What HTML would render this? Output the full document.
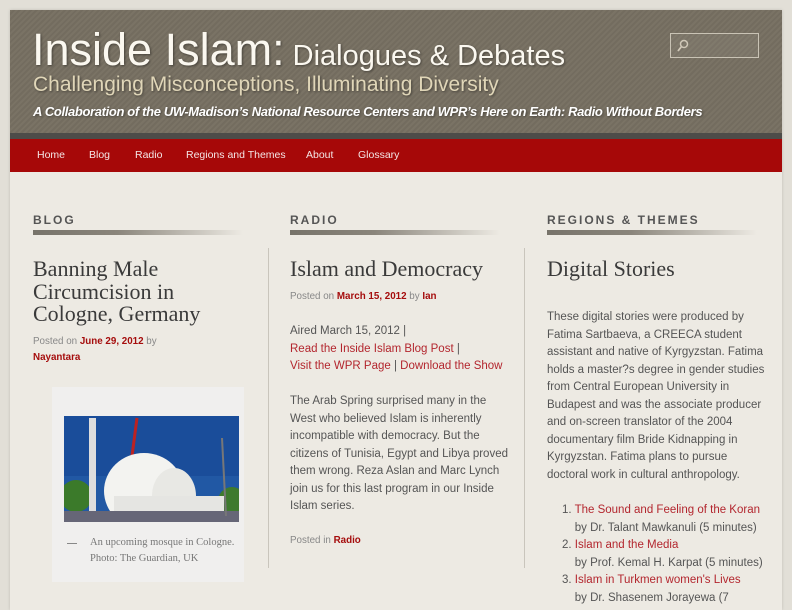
<!DOCTYPE html>
<html><head><meta charset="utf-8"><style>
*{margin:0;padding:0;box-sizing:border-box}
body{width:792px;height:600px;overflow:hidden;background:#e2dfd7;font-family:"Liberation Sans",sans-serif;position:relative}
.box{position:absolute;left:10px;top:10px;width:772px;height:600px;background:#edeae3;box-shadow:0 0 3px rgba(0,0,0,.15)}
.hdr{position:absolute;left:10px;top:10px;width:772px;height:123px;background:repeating-linear-gradient(135deg,#7a7365 0 2px,#736c5f 2px 4px)}
.band{position:absolute;left:10px;top:133px;width:772px;height:6px;background:#4d4c49}
.nav{position:absolute;left:10px;top:139px;width:772px;height:33px;background:#a60808}
.nav span{position:absolute;top:10px;font-size:10.5px;color:#f4e6e6}
.t{position:absolute;color:#fff;white-space:nowrap;text-shadow:1px 1px 2px rgba(0,0,0,.4)}
.search{position:absolute;left:670px;top:33px;width:89px;height:25px;border:1px solid #c9c3b5;background:rgba(255,255,255,.05)}
.h{position:absolute;top:213px;font-size:12px;font-weight:bold;letter-spacing:2px;color:#555}
.bar{position:absolute;top:230px;width:210px;height:5px;background:linear-gradient(90deg,#77736a,#8a857b 40%,rgba(200,195,185,0))}
.vl{position:absolute;top:248px;width:1px;height:320px;background:#c9c5bc}
.title{position:absolute;font-family:"Liberation Serif",serif;font-size:22px;line-height:22.5px;color:#3a3a3a}
.meta{position:absolute;font-size:9.8px;color:#888;line-height:16px}
.meta b{color:#a50d0d}
.p{position:absolute;font-size:11.5px;line-height:17.5px;color:#555;white-space:nowrap}
a{color:#b3262e;text-decoration:none}
</style></head><body>
<div class="box"></div>
<div class="hdr"></div>
<div class="band"></div>
<div class="t" style="left:32px;top:24px;font-size:45px;line-height:52px;color:#fbf8f0">Inside Islam:<span style="font-size:29px"> Dialogues &amp; Debates</span></div>
<div class="t" style="left:33px;top:73px;font-size:21px;color:#e0d6b8">Challenging Misconceptions, Illuminating Diversity</div>
<div class="t" style="left:33px;top:104px;font-size:13px;font-weight:bold;font-style:italic;letter-spacing:-0.35px">A Collaboration of the UW-Madison’s National Resource Centers and WPR’s Here on Earth: Radio Without Borders</div>
<div class="search"><svg width="14" height="16" style="position:absolute;left:5px;top:4px"><circle cx="8" cy="6" r="3.5" fill="none" stroke="#d0c8b8" stroke-width="1.5"/><line x1="5.5" y1="8.5" x2="2" y2="13" stroke="#d0c8b8" stroke-width="1.8"/></svg></div>
<div class="nav"><span style="left:27px">Home</span><span style="left:79px">Blog</span><span style="left:125px">Radio</span><span style="left:176px">Regions and Themes</span><span style="left:296px">About</span><span style="left:348px">Glossary</span></div>

<div class="h" style="left:33px">BLOG</div><div class="bar" style="left:33px"></div>
<div class="h" style="left:290px">RADIO</div><div class="bar" style="left:290px"></div>
<div class="h" style="left:547px">REGIONS &amp; THEMES</div><div class="bar" style="left:547px"></div>
<div class="vl" style="left:268px"></div><div class="vl" style="left:524px"></div>

<div class="title" style="left:33px;top:258px">Banning Male<br>Circumcision in<br>Cologne, Germany</div>
<div class="meta" style="left:33px;top:334px">Posted on <b>June 29, 2012</b> by<br><b>Nayantara</b></div>
<div style="position:absolute;left:52px;top:387px;width:192px;height:195px;background:#f0efee"></div>
<svg style="position:absolute;left:64px;top:416px" width="175" height="106">
<rect width="175" height="106" fill="#1a4d9a"/><rect y="60" width="175" height="46" fill="#2e6ab5" opacity=".4"/>
<circle cx="12" cy="80" r="16" fill="#3b7a2a"/><circle cx="168" cy="85" r="14" fill="#3e7a2e"/>
<rect x="25" y="2" width="7" height="100" fill="#ddd"/><line x1="73" y1="2" x2="68" y2="40" stroke="#b22" stroke-width="3"/>
<ellipse cx="80" cy="75" rx="40" ry="38" fill="#f3f3f0"/><ellipse cx="110" cy="80" rx="22" ry="28" fill="#e8e8e4"/>
<rect x="50" y="80" width="110" height="26" fill="#e5e5e2"/><rect x="0" y="95" width="175" height="11" fill="#667"/>
<line x1="158" y1="22" x2="162" y2="100" stroke="#777" stroke-width="2"/></svg>
<div style="position:absolute;left:67px;top:543px;width:10px;height:1px;background:#888"></div>
<div class="p" style="left:90px;top:535px;font-family:'Liberation Serif',serif;font-size:10.5px;line-height:15.5px;color:#777">An upcoming mosque in Cologne.<br>Photo: The Guardian, UK</div>

<div class="title" style="left:290px;top:258px">Islam and Democracy</div>
<div class="meta" style="left:290px;top:289px">Posted on <b>March 15, 2012</b> by <b>Ian</b></div>
<div class="p" style="left:290px;top:323px">Aired March 15, 2012 |<br><a>Read the Inside Islam Blog Post</a> |<br><a>Visit the WPR Page</a> | <a>Download the Show</a></div>
<div class="p" style="left:290px;top:393px">The Arab Spring surprised many in the<br>West who believed Islam is inherently<br>incompatible with democracy. But the<br>citizens of Tunisia, Egypt and Libya proved<br>them wrong. Reza Aslan and Marc Lynch<br>join us for this last program in our Inside<br>Islam series.</div>
<div class="meta" style="left:290px;top:533px">Posted in <b>Radio</b></div>

<div class="title" style="left:547px;top:258px">Digital Stories</div>
<div class="p" style="left:547px;top:309px">These digital stories were produced by<br>Fatima Sartbaeva, a CREECA student<br>assistant and native of Kyrgyzstan. Fatima<br>holds a master?s degree in gender studies<br>from Central European University in<br>Budapest and was the associate producer<br>and on-screen translator of the 2004<br>documentary film Bride Kidnapping in<br>Kyrgyzstan. Fatima plans to pursue<br>doctoral work in cultural anthropology.</div>
<div class="p" style="left:562px;top:502px">1. <a>The Sound and Feeling of the Koran</a><br>&nbsp;&nbsp;&nbsp;&nbsp;by Dr. Talant Mawkanuli (5 minutes)<br>2. <a>Islam and the Media</a><br>&nbsp;&nbsp;&nbsp;&nbsp;by Prof. Kemal H. Karpat (5 minutes)<br>3. <a>Islam in Turkmen women's Lives</a><br>&nbsp;&nbsp;&nbsp;&nbsp;by Dr. Shasenem Jorayewa (7</div>
</body></html>
